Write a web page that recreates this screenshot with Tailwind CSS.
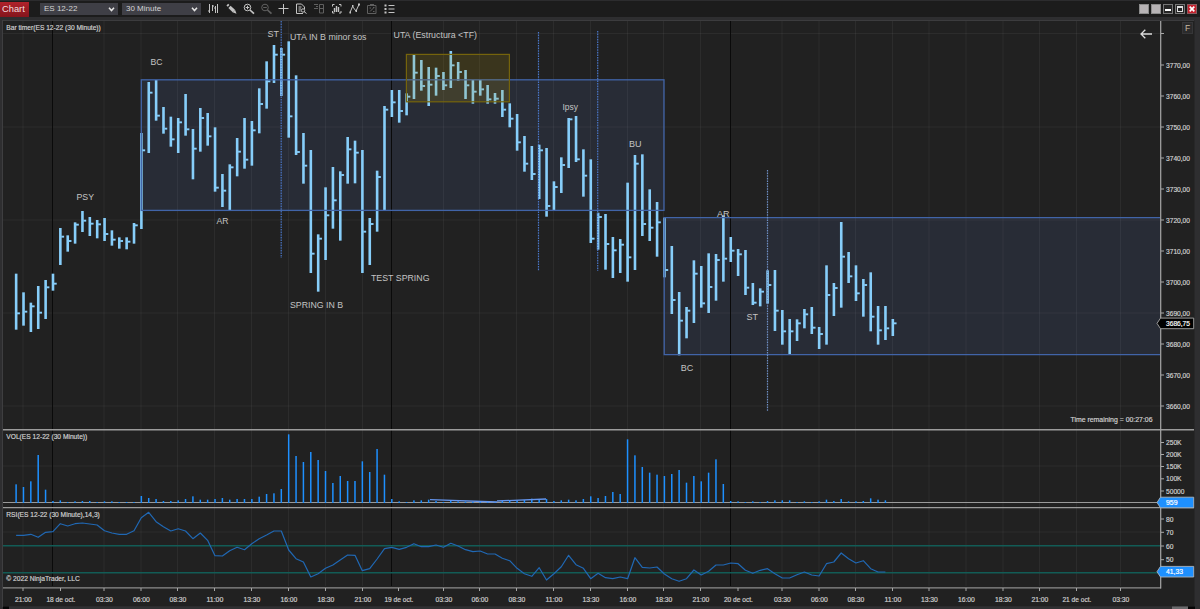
<!DOCTYPE html>
<html lang="es">
<head>
<meta charset="utf-8">
<title>Chart</title>
<script src="https://cdn.jsdelivr.net/npm/@tailwindcss/browser@4"></script>
</head>
<body class="w-[1200px] h-[609px] overflow-hidden bg-[#2e2e30] font-['Liberation_Sans',sans-serif] flex flex-col">
<header class="h-[17px] shrink-0 bg-[#1c1c1c] border-t border-[#2c2c2e] flex items-center">
  <div class="w-[29px] h-[15px] bg-linear-to-b from-[#b0222b] to-[#84151c] text-[#f0dede] text-[9.3px] leading-[15px] pl-[2px]">Chart</div>
  <div class="ml-[11px] w-[78px] h-[12px] bg-[#3f3f46] text-[#d4d4d4] text-[8px] leading-[12px] pl-[4px] pr-[3px] flex items-center justify-between"><span>ES 12-22</span><svg width="7" height="5" viewBox="0 0 7 5" fill="none" stroke="#e4e4e4" stroke-width="1.5"><path d="M1 .8 3.5 3.6 6 .8"/></svg></div>
  <div class="ml-[4px] w-[79px] h-[12px] bg-[#3f3f46] text-[#d4d4d4] text-[8px] leading-[12px] pl-[4px] pr-[3px] flex items-center justify-between"><span>30 Minute</span><svg width="7" height="5" viewBox="0 0 7 5" fill="none" stroke="#e4e4e4" stroke-width="1.5"><path d="M1 .8 3.5 3.6 6 .8"/></svg></div>
  <svg class="ml-[6px]" width="190" height="14" viewBox="207 2 190 14" fill="none" stroke="#c4c4c4" stroke-width="1">
    <path d="M209.500 4v9M208 11h1.500M212.500 5v6M212.500 6h1.500M215.500 6v7M214 8h1.500M217.500 4v9"/>
    <path d="M229.500 6.800 233.800 11" stroke-width="3.200"/><path d="M227.300 4.600 228.600 5.900" stroke-width="2.400"/><path d="M232.500 12.300 236.500 13.700 235 9.800Z" fill="#c4c4c4" stroke="none"/>
    <circle cx="247.500" cy="7.500" r="3.300"/><path d="M245.700 7.500h3.600M247.500 5.700v3.600"/><path d="m250 10 4 3.700" stroke-width="1.700"/>
    <g stroke="#606060"><circle cx="265" cy="7.500" r="3.300"/><path d="M263.200 7.500h3.600"/><path d="m267.500 10 4 3.700" stroke-width="1.700"/></g>
    <path d="M283.500 4v10M278.500 8.500h10"/>
    <path d="M303 13.500h-6.500v-9.500h5l3 3v2M298.500 7h3M298.500 9h2.500M298.500 11h2"/><circle cx="303" cy="10.500" r="1.700"/><path d="m304 11.500 2.500 2"/>
    <g stroke="#606060"><path d="M314 4.500h4M314 8.500h4M316 6.500h2M319.500 4.500h4v8.500h-4zM319.500 8.500h4"/></g>
    <path d="M332.500 6.500v-2h2M339 4.500h2v2M332.500 11v2h2M339 13h2v-2"/><path d="M334.500 8v4M336.500 6v6M338.500 7v5" stroke-width="1.400"/>
    <path d="m350 12.500 2.500-6 3.500 4.500 3-6.500"/><path d="M349.500 12.500h1.500M352 6h1.500M355.500 11h1.500M358 4.500h2" stroke-width="2"/>
    <g stroke="#606060"><path d="M367.500 5.500h8.500v8h-8.500zM370 4.500h4M369.500 8h1.500M373 7.500h1.500M370 11.500l3.500-3.500M373 11.500h1.500"/></g>
    <path d="M388.500 5.500h6M388.500 9h6M388.500 12.500h6"/><path d="M384.500 5.500h2M384.500 9h2M384.500 12.500h2" stroke-width="2"/>
  </svg>
  <div class="ml-auto mr-[3px] flex gap-[2px]">
    <div class="w-[10px] h-[10px] bg-[#b8b4b6] border border-[#8c8c8c]"></div>
    <div class="w-[10px] h-[10px] bg-[#b8b4b6] border border-[#8c8c8c]"></div>
    <div class="w-[10px] h-[10px] bg-[#262626] border border-[#777] flex items-center justify-center"><i class="block w-[6px] h-[2px] mt-[2px] bg-white"></i></div>
    <div class="w-[10px] h-[10px] bg-[#262626] border border-[#777] flex items-center justify-center"><i class="block w-[6px] h-[6px] border border-t-2 border-[#dedede]"></i></div>
    <div class="w-[10px] h-[10px] bg-[#c3202c] border border-[#8b5a5e] flex items-center justify-center"><svg width="6" height="6" viewBox="0 0 6 6" stroke="#fff" stroke-width="1.700"><path d="M.7.7 5.300 5.300M5.300.7.7 5.300"/></svg></div>
  </div>
</header>
<main class="h-[592px]">
  <svg id="chart" width="1200" height="592" viewBox="0 17 1200 592" class="block"></svg>
</main>
<script>
const svg = document.getElementById('chart');
const out = [];
const X = i => 16.1 + 7.367 * i;
const rect = (x, y, w, h, fill, extra = '') => out.push(`<rect x="${x}" y="${y}" width="${w}" height="${h}" fill="${fill}" ${extra}/>`);
const line = (x1, y1, x2, y2, s, extra = '') => out.push(`<line x1="${x1}" y1="${y1}" x2="${x2}" y2="${y2}" stroke="${s}" ${extra}/>`);
const text = (x, y, s, size, w, fill = '#d0d0d0', anchor = 'start') => out.push(`<text x="${x}" y="${y}" font-size="${size}" fill="${fill}" ${size < 8 ? `stroke="${fill}" stroke-width=".18"` : ''} text-anchor="${anchor}" ${w ? `textLength="${w}" lengthAdjust="spacingAndGlyphs"` : ''}>${s.replace('<', '&lt;')}</text>`);

rect(3, 20.5, 1191.5, 586, '#212121');
rect(2, 20, 1, 587, '#3e3e40');
line(3, 20.5, 1194, 20.5, '#3c3c3e');

// time axis: [x, label, has grid line]
const ticks = [[23,'21:00',1],[60.5,'18 de oct.',0],[104,'03:30',1],[141,'06:00',1],[177.5,'08:30',1],[214.5,'11:00',1],[251.5,'13:30',1],[288.5,'16:00',1],[325.5,'18:30',1],[362.500,'21:00',1],[398.500,'19 de oct.',0],[443.500,'03:30',1],[479.500,'06:00',1],[516.500,'08:30',1],[553.500,'11:00',1],[590.500,'13:30',1],[627.500,'16:00',1],[663.500,'18:30',1],[700.500,'21:00',1],[738,'20 de oct.',0],[782,'03:30',1],[819,'06:00',1],[855.500,'08:30',1],[892.500,'11:00',1],[929,'13:30',1],[966,'16:00',1],[1003,'18:30',1],[1039.500,'21:00',1],[1076.500,'21 de oct.',1],[1120.500,'03:30',1]];

// zone fills
rect(141, 80, 523, 130.5, '#282c36');
rect(664, 218, 496, 136.500, '#282c36');

// grid
for (const [x, , g] of ticks) if (g) line(x, 21, x, 586, '#fff', 'stroke-opacity=".05"');
for (const y of [33.5, 127, 220, 313, 406, 466, 532]) line(3, y, 1160, y, '#fff', 'stroke-opacity=".05"');
for (const x of [52.500, 391.500, 730.500]) line(x, 21, x, 586, '#0a0a0a');

// price bars per segment: top offset, then [high, low, close] in thirds of a pixel
const segs = [
 [150, [[371,539,490],[427,527,485],[458,546,469],[408,537,488],[390,507,412],[371,422,401],[234,345,260],[256,305,273],[217,281,224],[183,246,212],[201,258,221],[210,265,223],[204,273,252],[241,287,269],[262,296,273],[262,298,275],[219,281,226]]],
 [60, [[219,507,271],[66,279,98],[60,182,167],[141,221,206],[170,260,238],[174,279,187],[102,227,208],[207,358,266],[144,275,174],[159,257,229],[202,395,383],[342,441,392],[313,450,322],[234,349,275],[174,326,299],[183,317,211],[85,220,132]]],
 [20, [[124,266,184],[75,189,104],[84,228,104],[64,353,289],[166,405,396],[339,491,437],[390,759,701],[643,815,656],[502,720,586],[441,626,541],[454,662,465],[351,491,388],[362,490,398],[390,759,635],[594,735,612],[452,635,471],[258,571,269],[210,291,247],[210,308,273],[220,286,230],[102,237,158],[120,212,198],[141,258,194],[143,227,168],[156,210,196],[93,204,136],[126,182,156],[150,237,196],[180,251,215],[180,227,208],[195,251,238],[219,251,236],[210,291,269],[250,322,296]]],
 [70, [[132,242,217],[198,305,281],[228,330,312],[224,387,241],[234,440,408],[334,420,351],[262,369,285],[144,294,148],[138,276,268],[238,380,317],[268,519,506],[428,539,441],[432,599,522],[501,624,541],[507,609,524],[338,635,562],[255,600,281],[253,498,462],[358,513,473],[396,560,457],[443,622,600]]],
 [200, [[138,342,300],[276,466,362],[321,415,332],[181,369,221],[198,323,310],[160,339,261],[162,302,180],[46,245,176],[111,186,152],[147,228,163],[150,285,263],[249,315,308],[265,319,275],[211,311,255],[210,393,332]]],
 [210, [[300,404,364],[327,434,364],[328,393,340],[297,355,313],[291,372,353],[351,417,372],[166,404,255],[219,318,234],[36,293,140],[126,219,199],[166,273,250],[207,320,225],[187,364,320],[288,404,361],[288,390,355],[327,378,340]]]
];
let n = 0;
for (const [y0, rows] of segs) for (const [h, l, c] of rows) {
  const x = X(n++), f = v => y0 + v / 3;
  rect((x - 1.25).toFixed(2), f(h).toFixed(2), 2.6, ((l - h) / 3).toFixed(2), '#87cefa');
  rect((x + 1).toFixed(2), (f(c) - .95).toFixed(2), 2.8, 1.9, '#87cefa');
}

// zone outlines
const zone = 'stroke-width="1.300"';
out.push(`<rect x="141.300" y="79.800" width="522.700" height="130.600" fill="none" stroke="#4164a8" ${zone}/>`);
out.push(`<path d="M1160 217.700H664.200V354.700H1160" fill="none" stroke="#4164a8" ${zone}/>`);
rect(406.400, 54.400, 103, 47.400, '#b99b0c', 'fill-opacity=".17" stroke="#75640c" stroke-width="1.200"');
for (const [x, a, b, s] of [[281.200,21,258,'#4a77c8'],[538.500,32,271,'#4a77c8'],[597.700,31,271,'#4a77c8'],[767.500,170,411,'#6f8fc4']])
  line(x, a, x, b, s, 'stroke-width="1.200" stroke-dasharray="1.600 1"');

// volume
const vol = [178,186,169,90,194,228,226,231,229,228,228,231,229,229,231,231,231,213,219,222,228,228,226,222,214,224,224,222,219,224,222,222,222,215,207,205,192,28,93,111,81,105,138,174,153,168,168,109,141,72,149,222,229,231,226,226,224,228,231,227,229,230,231,231,231,231,228,228,226,225,221,223,222,228,226,224,226,222,214,219,213,201,207,43,91,126,143,149,153,147,135,173,153,169,143,103,177,228,229,231,229,231,228,226,226,226,231,229,231,229,224,228,222,229,229,228,220,224,226];
line(3, 502.500, 1160, 502.500, '#9a9a9a');
vol.forEach((v, i) => rect((X(i) - .75).toFixed(2), (425 + v / 3).toFixed(2), 1.5, ((234 - v) / 3).toFixed(2), '#1e90ff'));
line(430, 499.600, 497, 502, '#6495ed', 'stroke-width="1.300"');
line(497, 501, 546, 499, '#6495ed', 'stroke-width="1.300"');

// RSI
line(3, 545.700, 1160, 545.700, '#125c56', 'stroke-width="1.500"');
line(3, 572.700, 1160, 572.700, '#125c56', 'stroke-width="1.500"');
const rsi = [331,331,328,337,322,320,296,303,296,294,297,300,317,324,328,328,317,278,262,290,305,318,311,318,341,324,346,392,393,377,367,374,356,341,330,318,318,375,401,411,456,446,430,420,405,390,391,437,431,402,371,367,373,367,356,365,365,360,367,355,363,374,380,378,387,387,400,407,430,446,454,428,465,446,425,391,419,430,461,445,458,461,456,461,398,427,429,426,447,461,469,461,435,450,439,420,420,414,416,436,445,436,431,446,459,459,449,441,450,453,416,411,384,401,414,407,431,441,441];
out.push(`<polyline fill="none" stroke="#2068b4" stroke-width="1.200" stroke-linejoin="round" points="${rsi.map((v, i) => X(i).toFixed(1) + ',' + (425 + v / 3).toFixed(1)).join(' ')}"/>`);

// frames and axes
line(3, 429.800, 1194, 429.800, '#9c9c9c', 'stroke-width="1.400"');
line(3, 507.600, 1194, 507.600, '#9c9c9c', 'stroke-width="1.200"');
line(3, 587.900, 1161, 587.900, '#8c8c8c', 'stroke-width="1.400"');
line(1160.700, 21, 1160.700, 588.500, '#a8a8a8', 'stroke-width="1.200"');
for (const [x, s] of ticks) {
  line(x, 588, x, 591, '#a8a8a8');
  text(x + .4, 601.500, s, 6.8, s.length > 5 ? 29 : 17, '#cfcfcf', 'middle');
}
const yl = (y, s, w) => { line(1161, y, 1164, y, '#a8a8a8'); text(1166, y + 2.500, s, 6.8, w); };
line(1161, 33.500, 1164, 33.500, '#a8a8a8');
for (let i = 0; i < 12; i++) yl(65 + 31 * i, (3770 - 10 * i) + ',00', 24);
yl(442.500, '250K', 15.500); yl(454.500, '200K', 15.500); yl(466.500, '150K', 15.500); yl(478.800, '100K', 15.500); yl(491, '50000', 18.500);
yl(519, '80', 7.500); yl(532.300, '70', 7.500); yl(546, '60', 7.500); yl(559.700, '50', 7.500);
const tag = (y, s, w, fill, stroke) => {
  out.push(`<path d="M1157 ${y}L1160.500 ${y - 5.300}H1193.700V${y + 5.300}H1160.500Z" fill="${fill}" stroke="${stroke}" stroke-width=".9"/>`);
  text(1166, y + 2.500, s, 6.8, w, '#fff');
};
tag(323.400, '3686,75', 24, '#000', '#a8a8a8');
tag(502.500, '959', 11.500, '#1e90ff', '#a9b4c0');
tag(571.700, '41,33', 17, '#1e90ff', '#a9b4c0');

// panel captions
text(6.300, 30.300, 'Bar timer(ES 12-22 (30 Minute))', 6.8, 94.500);
text(6.300, 439.400, 'VOL(ES 12-22 (30 Minute))', 6.8, 81);
text(6.300, 517.400, 'RSI(ES 12-22 (30 Minute),14,3)', 6.8, 93.500);
text(6.300, 581.300, '© 2022 NinjaTrader, LLC', 6.8, 73.500);
text(1070.500, 421.800, 'Time remaining = 00:27:06', 6.8, 82);

// annotations
for (const [x, y, s, w] of [[150.500,65,'BC',12],[76.500,200.200,'PSY',17.500],[267.500,36.500,'ST',11.500],[290,39.500,'UTA IN B minor sos',76.500],[393.500,38.300,'UTA (Estructura <TF)',83.500],[216.500,224.200,'AR',12],[290,308,'SPRING IN B',53],[371,280.500,'TEST SPRING',58.500],[562.500,109.700,'Ipsy',15.500],[629,146.700,'BU',12.500],[717,216.500,'AR',12.500],[746.500,320,'ST',11.500],[680.700,371,'BC',12.500]])
  text(x, y, s, 8.800, w, '#c4c4c4');

out.push('<path d="M1152 34h-11M1145.300 29.800 1141 34l4.300 4.200" fill="none" stroke="#dcdcdc" stroke-width="1.300"/>');
rect(1182.500, 22.500, 10, 11, '#2b2b2c', 'stroke="#363638"');
text(1185, 31.200, 'F', 8.500, 0, '#c9b9a4');

// bottom scroll bar
rect(3, 606.500, 1192, 3, '#303032');
rect(1172, 606.500, 16, 3, '#6a6a6c');
rect(1188, 606.500, 7, 3, '#050505');
rect(3, 606.500, 6, 3, '#050505');
svg.innerHTML = out.join('');
</script>
</body>
</html>
